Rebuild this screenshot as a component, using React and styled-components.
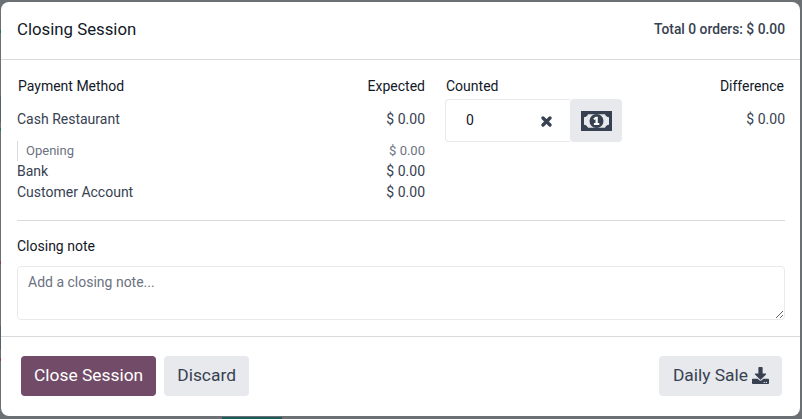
import React from "react";
import styled, { createGlobalStyle } from "styled-components";
import { FaDownload } from "react-icons/fa";

const Global = createGlobalStyle`
  html, body { margin: 0; padding: 0; height: 100%; overflow: hidden; }
  body { font-family: Roboto, "Liberation Sans", sans-serif; font-size: 14px; color: #374151; background: #6b7075; }
`;

const Backdrop = styled.div`
  width: 802px; height: 419px; box-sizing: border-box;
  padding: 2px 2px 3px 1px;
  background-color: #6b7075;
  background-image:
    linear-gradient(to bottom,
      transparent 30px, #1f6f66 30px, #1f6f66 33px, transparent 33px,
      transparent 96px, #55606a 96px, #55606a 122px, transparent 122px,
      transparent 128px, #1f6f66 128px, #1f6f66 131px, transparent 131px,
      transparent 261px, #8a3a48 261px, #8a3a48 264px, transparent 264px,
      transparent 326px, #55606a 326px, #55606a 350px, transparent 350px,
      transparent 358px, #8a3a48 358px, #8a3a48 361px, transparent 361px),
    linear-gradient(#1c5c58, #1c5c58);
  background-size: 1px 100%, 60px 2px;
  background-position: 0 0, 222px 417px;
  background-repeat: no-repeat;
`;
const Modal = styled.div`
  height: 100%; display: flex; flex-direction: column;
  background: #fff; border-radius: 8px; overflow: hidden;
`;
const Header = styled.header`
  flex: none; display: flex; align-items: center; justify-content: space-between;
  padding: 0 15px 4px 16px; height: 53px; border-bottom: 1px solid #d8dadd;
`;
const Title = styled.h4`
  margin: 0; font-size: 16.8px; font-weight: 400; color: #111827;
`;
const Total = styled.div`
  font-weight: 500; font-size: 13.8px; color: #374151; margin-top: 1px;
`;
const Body = styled.main`
  flex: 1; display: flex; flex-direction: column; padding: 0 15px 0 16px;
`;
const Grid = styled.div`
  display: grid; grid-template-columns: 408px 20px 1fr 150px; row-gap: 5px;
  padding-top: 17px; height: 161px; box-sizing: border-box;
  align-content: start; border-bottom: 1px solid #d8dadd;
`;
const Cell = styled.div`
  box-sizing: border-box;
  display: flex; align-items: center; height: ${p => p.$h || 21}px;
  padding-left: ${p => p.$pl || 0}px;
  padding-right: ${p => p.$pr || 0}px;
  padding-bottom: ${p => p.$pb || 0}px;
  justify-content: ${p => (p.$right ? "flex-end" : "flex-start")};
  color: ${p => (p.$muted ? "#6b7280" : p.$head ? "#111827" : "#374151")};
  font-size: ${p => (p.$muted ? "13px" : "14px")};
`;
const Label = styled(Cell)`justify-content: space-between;`;
const SubLabel = styled.span`
  display: flex; align-items: center; height: 20px; box-sizing: border-box;
  padding: 0 0 2px 8px; position: relative; top: 1px;
  border-left: 1px solid #d8dadd;
`;
const Group = styled.div`
  grid-column: 1; display: flex; flex-direction: column;
`;
const Counted = styled.div`
  display: flex; height: 43px;
`;
const InputBox = styled.div`
  width: 125px; box-sizing: border-box; border: 1px solid #e7e9ed; border-right: none;
  border-radius: 4px 0 0 4px; display: flex; align-items: center; justify-content: space-between;
  padding: 0 18px 2px 20px; font-size: 14px; color: #111827;
`;
const XMark = styled.svg`
  width: 11px; height: 11px; margin-top: 4px; flex: none;
`;
const CashButton = styled.button`
  width: 52px; height: 43px; border: none; background: #e7e9ed; border-radius: 4px; padding: 0;
  display: flex; align-items: center; justify-content: center; color: #374151;
`;
const NoteLabel = styled.div`
  margin-top: 15px; height: 20px; display: flex; align-items: center; color: #111827;
`;
const NoteArea = styled.textarea`
  margin-top: 10px; width: 100%; height: 54px; box-sizing: border-box; display: block;
  border: 1px solid #e7e9ed; border-radius: 4px; padding: 7px 10px 5px;
  font: 14px Roboto, sans-serif; color: #374151; outline: none;
  &::placeholder { color: #6b7280; opacity: 1; }
`;
const Footer = styled.footer`
  flex: none; height: 80px; box-sizing: border-box; border-top: 1px solid #d8dadd;
  display: flex; align-items: flex-start; gap: 8px; padding: 19px 18px 0 20px;
`;
const Button = styled.button`
  height: 40px; padding: 0 13px 2px; border: none; border-radius: 4px;
  font: 17.4px Roboto, sans-serif; display: flex; align-items: center; gap: 4px;
  background: ${p => (p.$primary ? "#714b67" : "#e7e9ed")};
  color: ${p => (p.$primary ? "#fff" : "#374151")};
`;
const DailyButton = styled(Button)`
  margin-left: auto; padding-left: 14px;
`;

const Bill = () => (
  <svg width="31" height="20" viewBox="0 0 31 20" fill="#374151">
    <path fillRule="evenodd" d="M0 0h31v20H0zM7 3.200C6.500 5 5 6 3 6.300v7.400C5 14 6.500 15 7 16.800h17c.5-1.800 2-2.800 4-3.100V6.300C26 6 24.500 5 24 3.200z" />
    <circle cx="15.500" cy="10" r="7" />
    <path fill="#fff" d="M14.600 5.700h2.200v6.300h1.500v2h-5.400v-2h1.600V8.300l-1.300.8-.9-1.600z" />
  </svg>
);

const Cross = () => (
  <XMark viewBox="0 0 11 11" aria-hidden="true">
    <path d="M2 2l7 7M9 2l-7 7" stroke="#374151" strokeWidth="3.300" strokeLinecap="round" fill="none" />
  </XMark>
);

export default function App() {
  return (
    <Backdrop>
      <Global />
      <Modal>
        <Header>
          <Title>Closing Session</Title>
          <Total>Total 0 orders: $ 0.00</Total>
        </Header>
        <Body>
          <Grid>
            <Label $head $pl={1} $h={17}>Payment Method<span>Expected</span></Label>
            <span />
            <Cell $head $pl={1} $h={17}>Counted</Cell>
            <Cell $head $right $pr={1} $h={17}>Difference</Cell>
            <Group>
              <Label $h={41} $pb={1}>Cash Restaurant<span>$ 0.00</span></Label>
              <Label $muted $h={20}><SubLabel>Opening</SubLabel><span>$ 0.00</span></Label>
              <Label $h={21}>Bank<span>$ 0.00</span></Label>
              <Label $h={21}>Customer Account<span>$ 0.00</span></Label>
            </Group>
            <span />
            <Counted>
              <InputBox>0<Cross /></InputBox>
              <CashButton aria-label="Cash"><Bill /></CashButton>
            </Counted>
            <Cell $right $h={41} $pb={1}>$ 0.00</Cell>
          </Grid>
          <NoteLabel>Closing note</NoteLabel>
          <NoteArea placeholder="Add a closing note..." />
        </Body>
        <Footer>
          <Button $primary>Close Session</Button>
          <Button>Discard</Button>
          <DailyButton>Daily Sale <FaDownload size={17} /></DailyButton>
        </Footer>
      </Modal>
    </Backdrop>
  );
}
